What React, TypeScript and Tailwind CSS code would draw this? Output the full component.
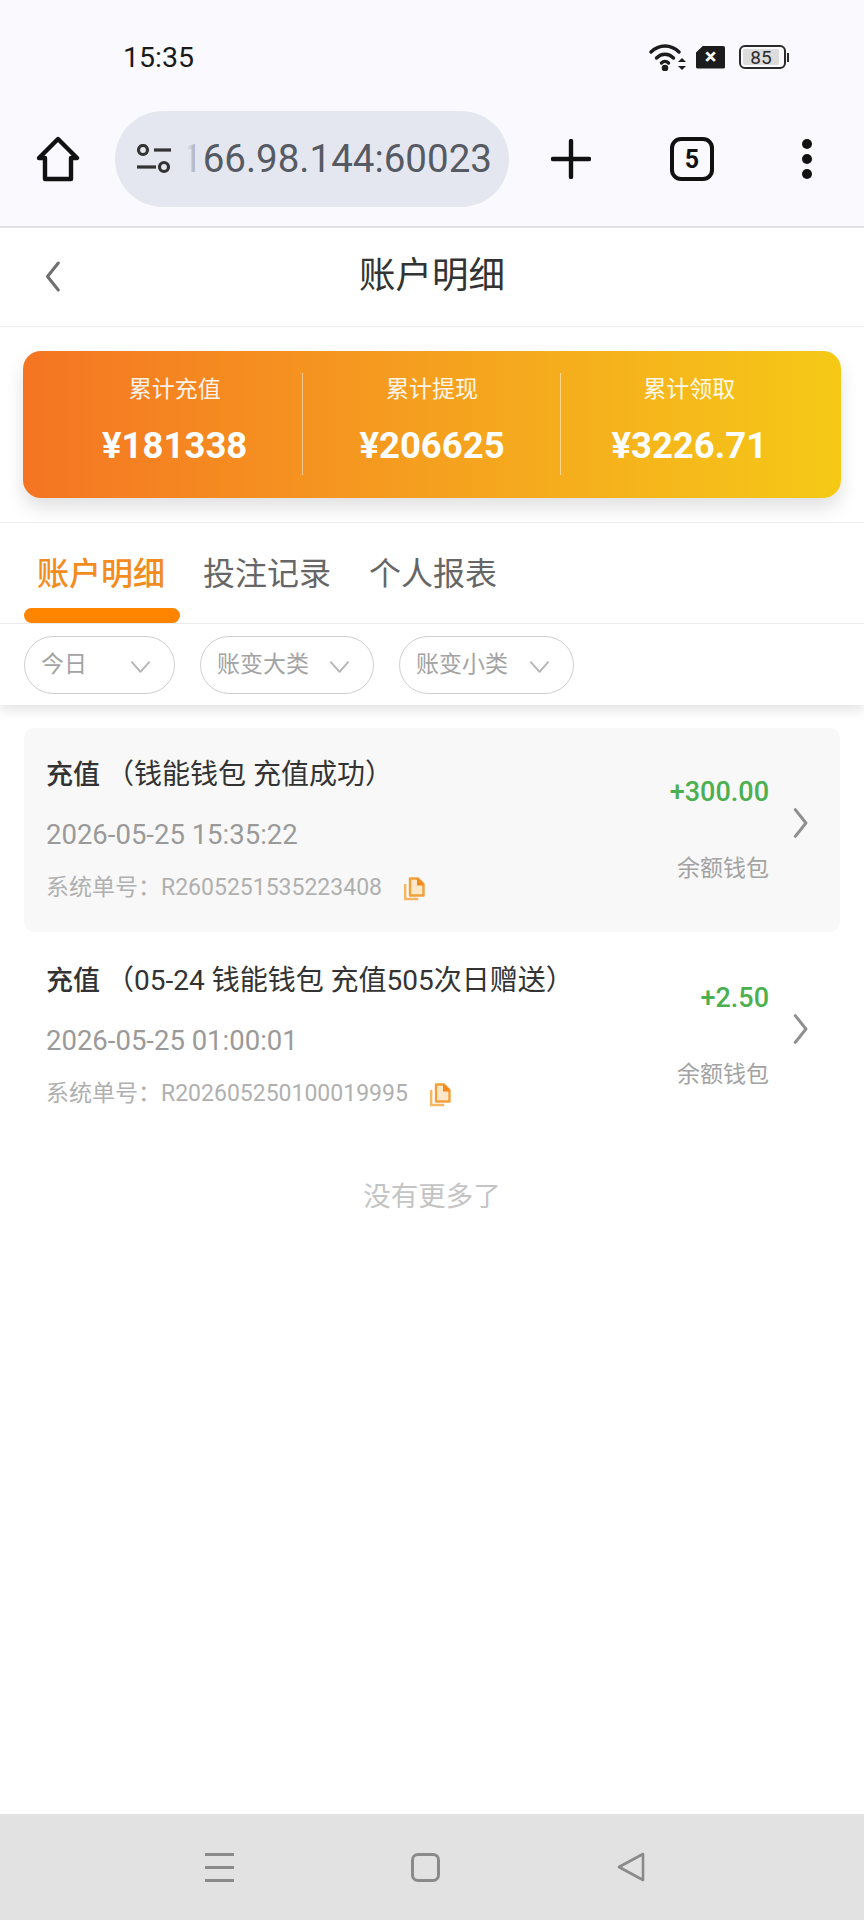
const font = { fontFamily: 'Roboto, "Noto Sans CJK SC", sans-serif' };

function Chevron({ dir, className }: { dir: "left" | "right" | "down"; className: string }) {
  const d = dir === "left" ? "M17 3 L5 18 L17 33" : dir === "right" ? "M3 3 L15 18 L3 33" : "M3 5 L12 15 L21 5";
  const vb = dir === "down" ? "0 0 24 20" : "0 0 20 36";
  return (
    <svg viewBox={vb} className={className} fill="none" stroke="currentColor" strokeWidth={dir === "down" ? 2 : 3.4} strokeLinecap="round" strokeLinejoin="round">
      <path d={d} />
    </svg>
  );
}

function CopyIcon() {
  return (
    <svg viewBox="0 0 22 24" className="w-[22px] h-[24px]" fill="none">
      <path d="M7 1.5h8l5.5 5.5v11.5H7z" fill="#fde7c8" stroke="#f2a03a" strokeWidth="2.4" strokeLinejoin="round" />
      <path d="M14 1.5h1.5l5 5.5v1.5H14z" fill="#f08a1d" />
      <path d="M2.2 7v15h13" stroke="#f5b563" strokeWidth="2.4" />
    </svg>
  );
}

function Stat({ label, value, divider }: { label: string; value: string; divider?: boolean }) {
  return (
    <div className="relative flex-1 flex flex-col items-center">
      {divider && <div className="absolute right-0 top-[22px] h-[102px] w-px bg-white/50" />}
      <div className="mt-[21px] h-[36px] leading-[36px] text-[23px] text-white/90">{label}</div>
      <div className="mt-[15px] h-[46px] leading-[46px] text-[36.5px] font-bold text-white">{value}</div>
    </div>
  );
}

function Filter({ label, w }: { label: string; w: string }) {
  return (
    <div className={`${w} h-[58px] rounded-[29px] border-[1.5px] border-[#cfcfcf] flex items-center justify-between pl-[16px] pr-[22px] bg-white`}>
      <span className="text-[23px] text-[#a3a3a3]">{label}</span>
      <Chevron dir="down" className="w-[23px] h-[20px] text-[#b5b5b5] mt-[3px]" />
    </div>
  );
}

function Row({ title, date, order, amount, active }: { title: string; date: string; order: string; amount: string; active?: boolean }) {
  return (
    <div className={`mx-[24px] h-[204px] mb-[2px] rounded-[10px] flex ${active ? "bg-[#f8f8f8]" : "bg-white"}`}>
      <div className="flex-1 pl-[22px]">
        <div className="mt-[28px] h-[38px] leading-[38px] text-[27px] text-[#333333] whitespace-nowrap">
          <span className="font-medium">充值</span>
          <span className="ml-[6px] text-[28px]">（{title}）</span>
        </div>
        <div className="mt-[22px] h-[38px] leading-[38px] text-[27.5px] text-[#9a9a9a]">{date}</div>
        <div className="mt-[17px] h-[34px] flex items-center text-[23px] text-[#b0b0b0] whitespace-nowrap">
          <span>系统单号：</span>
          <span>{order}</span>
          <span className="ml-[21px] mt-[2px]"><CopyIcon /></span>
        </div>
      </div>
      <div className="flex flex-col items-end w-[120px]">
        <div className="mt-[45px] h-[38px] leading-[38px] text-[27px] font-medium text-[#4caf50]">{amount}</div>
        <div className="mt-[41px] h-[34px] leading-[34px] text-[23px] text-[#a3a3a3]">余额钱包</div>
      </div>
      <div className="w-[71px] flex items-center pl-[23px] pb-[14px]">
        <Chevron dir="right" className="w-[19px] h-[32px] text-[#8f8f8f]" />
      </div>
    </div>
  );
}

export default function App() {
  return (
    <div style={font} className="w-[864px] h-[1920px] bg-white flex flex-col overflow-hidden">
      {/* browser chrome */}
      <div className="h-[226px] bg-[#f9f9fe]">
        <div className="h-[111px] flex items-start">
          <div className="ml-[123px] mt-[41px] text-[28.5px] leading-[34px] text-[#1a1a1a]">15:35</div>
          <div className="ml-auto mr-[75px] mt-[43px] flex items-center gap-[9px]">
            <svg viewBox="0 0 38 28" className="w-[38px] h-[28px] text-[#1c1c1c]" fill="none" stroke="currentColor" strokeWidth="3.4" strokeLinecap="round">
              <path d="M2 9 C10 1 22 1 30 9" />
              <path d="M7.5 15 C12.5 10 19.5 10 24.5 15" />
              <path d="M12.5 20 C14.5 18 17.5 18 19.5 20" />
              <circle cx="16" cy="25" r="1.6" fill="currentColor" />
              <path d="M29 19 L33 15 L37 19 Z M29 23 L33 27 L37 23 Z" fill="currentColor" stroke="none" />
            </svg>
            <div className="relative w-[29px] h-[23px] bg-[#1c1c1c] rounded-[2px] flex items-center justify-center [clip-path:polygon(25%_0,100%_0,100%_100%,0_100%,0_30%)]">
              <span className="text-white text-[22px] font-bold leading-none">×</span>
            </div>
            <div className="flex items-center ml-[5px]">
              <div className="w-[47px] h-[24px] rounded-[6px] border-2 border-[#2a2a2a] flex items-center p-[2px]">
                <div className="w-[36px] h-full bg-[#dcdcdc] rounded-[2px] flex items-center justify-center text-[19px] leading-none text-[#2a2a2a]">85</div>
              </div>
              <div className="w-[2px] h-[9px] bg-[#2a2a2a] ml-[1px]" />
            </div>
          </div>
        </div>
        <div className="h-[96px] flex items-center">
          <svg viewBox="0 0 44 46" className="ml-[36px] w-[44px] h-[46px] text-[#111111]" fill="none" stroke="currentColor" strokeWidth="4.4" strokeLinejoin="round" strokeLinecap="round">
            <path d="M22 3 L41 22 H35 V43 H9 V22 H3 Z" />
          </svg>
          <div className="ml-[35px] w-[394px] h-[96px] rounded-[48px] bg-[#e5e7f0] flex items-center">
            <svg viewBox="0 0 38 30" className="ml-[20px] w-[38px] h-[30px] shrink-0 text-[#333333]" fill="none" stroke="currentColor" strokeWidth="3.2">
              <circle cx="8" cy="6" r="4.5" />
              <path d="M19 6 H36" />
              <path d="M2 23 H21" />
              <circle cx="29" cy="23" r="4.5" />
            </svg>
            <div className="relative ml-[8px] text-[38.5px] leading-[46px] text-[#555a63] whitespace-nowrap">
              166.98.144:60023
              <div className="absolute left-0 top-0 bottom-0 w-[20px] bg-gradient-to-r from-[#e5e7f0] from-30% to-[#e5e7f0]/30" />
            </div>
          </div>
          <svg viewBox="0 0 40 40" className="ml-[42px] w-[40px] h-[40px] text-[#111111]" fill="none" stroke="currentColor" strokeWidth="4.4" strokeLinecap="round">
            <path d="M20 2 V38 M2 20 H38" />
          </svg>
          <div className="ml-[79px] w-[44px] h-[44px] rounded-[11px] border-[4px] border-[#111111] flex items-center justify-center text-[25px] font-bold text-[#111111] leading-none">5</div>
          <div className="ml-[88px] flex flex-col gap-[5px]">
            <div className="w-[10px] h-[10px] rounded-full bg-[#111111]" />
            <div className="w-[10px] h-[10px] rounded-full bg-[#111111]" />
            <div className="w-[10px] h-[10px] rounded-full bg-[#111111]" />
          </div>
        </div>
      </div>
      <div className="h-[2px] bg-[#e2e2e2]" />

      {/* header */}
      <div className="relative h-[99px] border-b border-[#eeeeee] flex items-center justify-center">
        <div className="absolute left-[43px] top-[32px] text-[#6f6f6f]">
          <Chevron dir="left" className="w-[18px] h-[33px]" />
        </div>
        <div className="text-[36.5px] leading-[48px] text-[#333333] mb-[2px]">账户明细</div>
      </div>

      {/* summary card */}
      <div className="h-[196px] border-b border-[#eeeeee] pt-[24px] px-[23px]">
        <div className="h-[147px] rounded-[18px] flex px-[23px] bg-gradient-to-r from-[#f47422] via-[#f5a01f] to-[#f5c916] shadow-[0_10px_18px_rgba(0,0,0,0.12)]">
          <Stat label="累计充值" value="¥181338" divider />
          <Stat label="累计提现" value="¥206625" divider />
          <Stat label="累计领取" value="¥3226.71" />
        </div>
      </div>

      {/* tabs */}
      <div className="h-[101px] border-b border-[#eeeeee] flex flex-col">
        <div className="mt-[27px] h-[48px] flex items-center pl-[37px] gap-[38px] text-[32px] leading-[48px] text-[#666666]">
          <span className="font-medium text-[#f28c1e]">账户明细</span>
          <span>投注记录</span>
          <span>个人报表</span>
        </div>
        <div className="mt-auto ml-[24px] w-[156px] h-[15px] rounded-[8px] bg-[#ff8500]" />
      </div>

      {/* filters */}
      <div className="h-[81px] flex items-start pt-[12px] pl-[24px] gap-[25px] shadow-[0_6px_10px_rgba(0,0,0,0.10)]">
        <Filter label="今日" w="w-[151px]" />
        <Filter label="账变大类" w="w-[174px]" />
        <Filter label="账变小类" w="w-[175px]" />
      </div>

      {/* list */}
      <div className="pt-[23px]">
        <Row active title="钱能钱包 充值成功" date="2026-05-25 15:35:22" order="R2605251535223408" amount="+300.00" />
        <Row title="05-24 钱能钱包 充值505次日赠送" date="2026-05-25 01:00:01" order="R202605250100019995" amount="+2.50" />
      </div>
      <div className="mt-[37px] h-[40px] leading-[40px] text-center text-[27.5px] text-[#c4c4c4]">没有更多了</div>

      {/* nav bar */}
      <div className="mt-auto h-[106px] bg-[#e2e2e2] flex items-center">
        <div className="ml-[205px] flex flex-col gap-[10px] w-[29px]">
          <div className="h-[3px] bg-[#8a8a8a]" />
          <div className="h-[3px] bg-[#8a8a8a]" />
          <div className="h-[3px] bg-[#8a8a8a]" />
        </div>
        <div className="ml-[177px] w-[29px] h-[29px] rounded-[7px] border-[3px] border-[#8a8a8a]" />
        <svg viewBox="0 0 30 30" className="ml-[176px] w-[30px] h-[30px] text-[#8a8a8a]" fill="none" stroke="currentColor" strokeWidth="2.6" strokeLinejoin="round">
          <path d="M27 2 V28 L3 15 Z" />
        </svg>
      </div>
    </div>
  );
}
